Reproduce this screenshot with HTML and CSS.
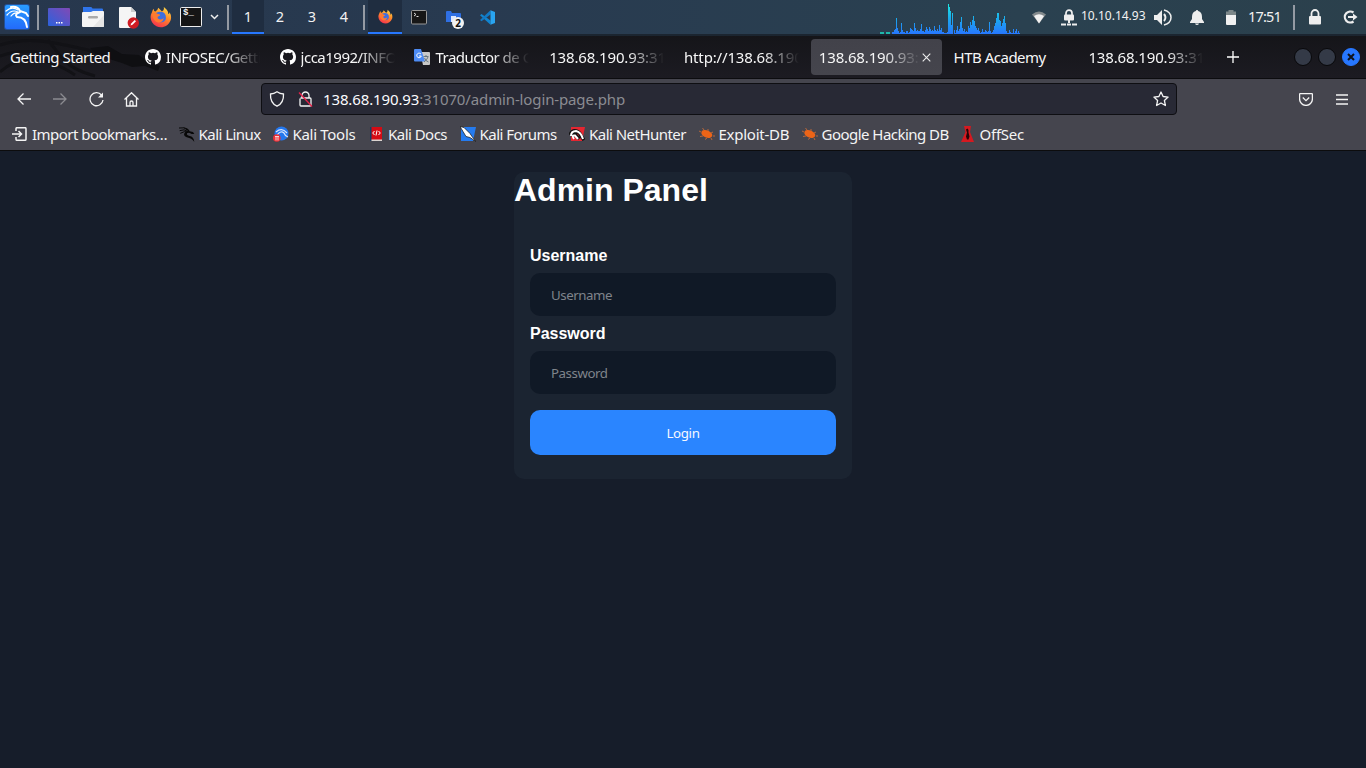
FILE: index.html
```html
<!DOCTYPE html>
<html lang="en">
<head>
<meta charset="utf-8">
<title>Admin Panel</title>
<link rel="stylesheet" href="styles.css">
</head>
<body>
<svg width="0" height="0" class="defs">
  <defs>
    <linearGradient id="gFox" x1=".8" y1="0" x2=".3" y2="1"><stop offset="0" stop-color="#ffe14a"/><stop offset=".45" stop-color="#ff8a28"/><stop offset="1" stop-color="#f5304f"/></linearGradient>
    <linearGradient id="gDesk" x1="0" y1="1" x2="1" y2="0"><stop offset="0" stop-color="#2b62dd"/><stop offset="1" stop-color="#8149b5"/></linearGradient>
    <linearGradient id="gNet" gradientUnits="userSpaceOnUse" x1="0" y1="4" x2="0" y2="34"><stop offset="0" stop-color="#1de9e0"/><stop offset=".5" stop-color="#1ba9ee"/><stop offset="1" stop-color="#2777ff"/></linearGradient>
    <linearGradient id="gKali" x1="0" y1="0" x2="0" y2="1"><stop offset="0" stop-color="#299cff"/><stop offset="1" stop-color="#236bfa"/></linearGradient>
    <symbol id="dragon" viewBox="0 0 24 24"><path d="M0 3Q8 1 13 6M1 7Q8 4 13 8M2 11Q8 7 14 9" fill="none" stroke="currentColor" stroke-width="1.500"/><path d="M6 2Q14 3 16 8L21 9L23 12L19 12Q14 9 12 11Q11 14 16 15Q22 16 23 24Q19 18 14 17.500Q6 16 8 11Q10 7 14 8Q12 5 6 2Z" fill="currentColor"/></symbol>
    <symbol id="firefox" viewBox="0 0 24 24"><path d="M15 1C19 4 20 6 20 9Q22 8 21 6Q24 11 22.500 15.500C20 22 13 25 7 22C1 19-1 12 2 7Q3 4 4 3Q4 6 6 6Q9 4 9 2Q11 4 13 6Q16 5 15 1Z" fill="url(#gFox)"/><path d="M6 8Q14 4 17 10Q19 17 12 18Q6 17 6 11L10 11Q12 9 9 9Q7 9 6 8Z" fill="#3e6fe0"/><path d="M2 9Q5 6 9 9Q12 9 10 11Q7 12 9 14Q12 16 15 13Q14 18 9 18Q4 17 2 9Z" fill="#ff7a30"/></symbol>
    <symbol id="github" viewBox="0 0 16 16"><path fill="currentColor" d="M8 0C3.580 0 0 3.580 0 8c0 3.540 2.290 6.530 5.470 7.590.4.070.55-.17.55-.38v-1.490c-2.010.37-2.530-.49-2.690-.94-.09-.23-.48-.94-.82-1.130-.28-.15-.68-.52-.01-.53.63-.01 1.080.58 1.230.82.72 1.210 1.870.87 2.330.66.07-.52.28-.87.51-1.070-1.780-.2-3.640-.89-3.640-3.950 0-.87.31-1.590.82-2.150-.08-.2-.36-1.020.08-2.120 0 0 .67-.21 2.200.82a7.500 7.500 0 0 1 4 0c1.530-1.040 2.200-.82 2.200-.82.44 1.100.16 1.920.08 2.120.51.56.82 1.270.82 2.150 0 3.070-1.870 3.750-3.650 3.950.29.25.54.73.54 1.480v2.200c0 .21.15.46.55.38A8 8 0 0 0 16 8c0-4.420-3.580-8-8-8Z"/></symbol>
    <symbol id="edb" viewBox="0 0 16 16"><ellipse cx="7.800" cy="8" rx="5.800" ry="3.600" transform="rotate(24 7.800 8)" fill="#ed6417"/><path d="M2 6L0 5M5 4L3.500 2M9 5L9 3M12 7l2-1M14 10h2M12 12l1 2M8 12L6 13.500M4 10L1 10.500" stroke="#b8673a" fill="none"/></symbol>
  </defs>
</svg>

<header class="panel">
  <span class="cell c-logo"><svg width="28" height="28" viewBox="0 0 28 28"><rect x="1" y="1" width="26" height="26" rx="3" fill="#1f6cf0" opacity=".45"/><rect x="2" y="2" width="24" height="24" rx="2" fill="url(#gKali)"/><g fill="none" stroke="#fff" stroke-linecap="round"><path d="M3 8Q9 3 15 7M4 12Q9 6 15 9M8 13Q11 9 15 10" stroke-width="1.200"/><path d="M8 4Q15 3 17 8L23 10L25 13M17 9Q11 11 14 14Q23 14 24 24" stroke-width="2"/></g></svg></span>
  <span class="sep"></span>
  <span class="cell c-desk"><svg width="22" height="18"><rect width="22" height="18" rx="1" fill="url(#gDesk)"/><path d="M8 14h1.500v1.500H8zM10.500 14h1.500v1.500h-1.500zM13 14h1.500v1.500H13z" fill="#fff"/></svg></span>
  <span class="cell c-app"><svg width="22" height="20"><path d="M1 0h8q1 0 1.500 1.500H20q1 0 1 1V9H1z" fill="#2f74ea"/><path d="M0 6q0-1 1-1h8l2-1h10q1 0 1 1v14q0 1-1 1H1q-1 0-1-1z" fill="#f4f4f4"/><path d="M22 8v11q0 1-1 1H11z" fill="#e5e5e5"/><rect x="6" y="9" width="10" height="2.500" rx="1.200" fill="#aaa"/></svg></span>
  <span class="cell c-app c-doc"><svg width="22" height="23"><path d="M2 1h11l5 5v16H2q-1 0-1-1V2q0-1 1-1z" fill="#f5f5f5"/><path d="M13 1l5 5h-5z" fill="#ccc"/><circle cx="15.300" cy="17" r="5.700" fill="#cf1c22"/><path d="M12.500 19.500l.7-2 3.500-3.500 1.300 1.300-3.500 3.500z" fill="#fff"/></svg></span>
  <span class="cell c-app"><svg width="22" height="22"><use href="#firefox"/></svg></span>
  <span class="cell c-term"><svg width="22" height="20"><rect x=".5" y=".5" width="21" height="19" rx="1" fill="#151515" stroke="#eee"/></svg><b class="prompt">$_</b></span>
  <span class="cell c-chev"><svg width="9" height="6"><path d="M1 1l3.500 3.500L8 1" fill="none" stroke="#eee" stroke-width="1.500"/></svg></span>
  <span class="sep"></span>
  <nav class="spaces"><span class="on">1</span><span>2</span><span>3</span><span>4</span></nav>
  <span class="sep"></span>
  <div class="tasks">
    <span class="on"><svg width="15" height="15"><use href="#firefox"/></svg></span>
    <span><svg width="16" height="15"><rect x=".5" y=".5" width="15" height="13.500" rx="1" fill="#171717" stroke="#999"/><path d="M3 3l2 1.500L3 6M5.500 6.500h2" fill="none" stroke="#ddd"/></svg></span>
    <span class="files"><svg width="15" height="12"><path d="M0 1q0-1 1-1h4l1 2h8q1 0 1 1v8H0z" fill="#2f6fe3"/><rect x="5" y="5" width="5" height="6" fill="#dce7ff"/></svg><em>2</em></span>
    <span><svg width="15" height="15" viewBox="0 0 15 15"><path d="M10.500 14.700L0 5.300 1.500 4l9 6.500" fill="#1185d0"/><path d="M10.500 4.500L1.500 11.300 0 10 10.500.3z" fill="#1279c4"/><path d="M10.500.3L15 2v11l-4.500 1.700z" fill="#29a4f0"/></svg></span>
  </div>
  <svg class="net" width="141" height="34" viewBox="0 0 141 34"><path d="M0 33h4M6 33h4" stroke="#1be0c8" stroke-width="1.300"/><path id="net" fill="url(#gNet)"/></svg>
  <span class="cell c-wifi"><svg width="14" height="13"><path d="M0 3.500Q7-2.500 14 3.500L7 12.500z" fill="#82898c"/><path d="M2 5Q7 1.500 12 5L7 12.500z" fill="#f1f1f1"/></svg></span>
  <span class="cell c-vpn"><svg width="16" height="17"><path d="M5 6V4.200a3 3 0 0 1 6 0V6" fill="none" stroke="#eee" stroke-width="1.700"/><rect x="3" y="5.500" width="10" height="6" rx="1" fill="#eee"/><path d="M7 11h2v3H7z" fill="#eee"/><path d="M0 15.500h5M6 15.500h4M11 15.500h5" stroke="#eee" stroke-width="2"/></svg></span>
  <span class="ip">10.10.14.93</span>
  <span class="cell c-vol"><svg width="18" height="17"><path d="M0 6h3l5-5v15l-5-5H0z" fill="#eee"/><path d="M10 5q3 3.500 0 7" fill="none" stroke="#eee" stroke-width="2"/><path d="M10 1q7 2 7 7.500T10 16" fill="none" stroke="#eee" stroke-width="1.500"/></svg></span>
  <span class="cell c-bell"><svg width="14" height="15"><path d="M7 0q1 0 1.200 1Q12 2 12 7v2l2 3v1H0v-1l2-3V7Q2 2 5.800 1 6 0 7 0zM5 13.500h4q-.5 1.500-2 1.500t-2-1.500z" fill="#eee"/></svg></span>
  <span class="cell c-bat"><svg width="10" height="15"><path d="M2.500 0h5v1.500H10V5H0V1.500h2.500z" fill="#7c8789"/><path d="M0 5h10v9q0 1-1 1H1q-1 0-1-1z" fill="#f1f1f1"/></svg></span>
  <span class="clock">17:51</span>
  <span class="sep"></span>
  <span class="cell c-lock"><svg width="14" height="16"><path d="M3.500 8V4.500a3.500 3.500 0 0 1 7 0V8" fill="none" stroke="#eee" stroke-width="1.800"/><rect x="1" y="7" width="12" height="8.500" rx="1" fill="#eee"/></svg></span>
  <span class="cell c-out"><svg width="15" height="14"><path d="M10.500 2.500A5.500 5.500 0 1 0 10.500 11.500" fill="none" stroke="#eee" stroke-width="2.200"/><path d="M5 6h5V3.500L14.500 7 10 10.500V8H5z" fill="#eee"/></svg></span>
</header>

<div class="tabs">
  <svg class="art" width="180" height="43" viewBox="0 36 180 43"><g fill="none" stroke="#121216"><path d="M0 45Q25 37 55 43T95 52T125 60M0 56Q20 49 42 53M48 40L62 58Q72 70 95 76M0 72Q30 45 75 75" stroke-width="3"/></g><path d="M90 48L108 46L122 54L139 55L147 61L160 66L158 71L145 66L132 67L122 63L106 58L96 54Z" fill="#0f0f12"/></svg>
  <div class="tab"><span>Getting Started</span></div>
  <div class="tab"><svg width="16" height="16"><use href="#github"/></svg><span class="fade">INFOSEC/Getti</span></div>
  <div class="tab"><svg width="16" height="16"><use href="#github"/></svg><span class="fade">jcca1992/INFOS</span></div>
  <div class="tab"><svg width="16" height="16"><path d="M6 3h9q1 0 1 1v11q0 1-1 1H9z" fill="#c8c8c8"/><path d="M1 0h6l4 12.500H1q-1 0-1-1V1q0-1 1-1z" fill="#4d8bf4"/><path d="M7 5.200a2.300 2.300 0 1 0 .3 1.800H5" fill="none" stroke="#fff"/><path d="M9.500 7.500h5M12 6v2M14 8q-1 3-4 5M10.500 9q1 3 4 4" fill="none" stroke="#607078" stroke-width=".9"/></svg><span class="fade">Traductor de G</span></div>
  <div class="tab num"><span class="fade">138.68.190.93:310</span></div>
  <div class="tab num"><span class="fade">http://138.68.190.</span></div>
  <div class="tab num active"><span class="fade">138.68.190.93:3</span><svg class="x" width="9" height="9"><path d="M.7.7l7.600 7.600M8.300.7L.7 8.300" stroke="#eee" stroke-width="1.100"/></svg></div>
  <div class="tab academy"><span>HTB Academy</span></div>
  <div class="tab num"><span class="fade">138.68.190.93:310</span></div>
  <svg class="plus" width="12" height="12"><path d="M6 0v12M0 6h12" stroke="#fff" stroke-width="1.300"/></svg>
  <div class="wins"><i></i><i></i><i class="close"><svg width="8" height="8"><path d="M1 1l6 6M7 1L1 7" stroke="#10131b" stroke-width="2"/></svg></i></div>
</div>

<div class="bars">
  <div class="toolbar">
    <svg class="nav" width="14" height="12"><path d="M14 6H1M6.500.5L1 6l5.500 5.500" /></svg>
    <svg class="nav dim" width="14" height="12"><path d="M0 6h13M7.500.5L13 6l-5.500 5.500"/></svg>
    <svg class="nav reload" width="15" height="15"><path d="M12.500 3A6.500 6.500 0 1 0 14 8"/><path d="M14 .5v5H9z" fill="#f4f4f4" stroke="none"/></svg>
    <svg class="nav" width="15" height="15"><path d="M.5 7.500l7-6.800 7 6.800M2.500 6v8h10V6M6 14v-3.500q0-1.500 1.500-1.500T9 10.500V14"/></svg>
    <div class="url">
      <svg class="nav shield" width="16" height="16"><path d="M8 .8q3 2 6.500 2.200Q15 12 8 15.200 1 12 1.500 3 5 2.800 8 .8z"/></svg>
      <svg class="nav lock" width="15" height="16"><path d="M4 7V4.500a3.500 3.500 0 0 1 7 0V7M2.500 7H12q1 0 1 1v6q0 1-1 1H3q-1 0-1-1V7.500"/><path d="M1 1.500l13 14" stroke="#e8214a"/></svg>
      <span class="addr"><b>138.68.190.93</b>:31070/admin-login-page.php</span>
      <svg class="nav star" width="16" height="16"><path d="M8 1l2.100 4.500 5 .6-3.700 3.400 1 5L8 12l-4.400 2.500 1-5L.9 6.100l5-.6z" stroke-linejoin="round"/></svg>
    </div>
    <svg class="nav pocket" width="14" height="13"><path d="M1 .7h12q.4 0 .4.800V6A6.400 6.400 0 0 1 .6 6V1.500Q.6.700 1 .7z"/><path d="M3.800 4.500L7 7.600l3.200-3.100"/></svg>
    <svg class="nav menu" width="12" height="11"><path d="M0 1h12M0 5.500h12M0 10h12"/></svg>
  </div>
  <div class="marks">
    <a style="width:166.500px"><svg class="nav" width="16" height="14"><path d="M4 4V1.700q0-1 1-1h8q1 0 1 1v10.600q0 1-1 1H5q-1 0-1-1V10M0 7h9M6.500 4L9.500 7l-3 3" stroke-width="1.500"/></svg><span>Import bookmarks…</span></a>
    <a style="width:94px"><svg width="16" height="16" color="#080808"><use href="#dragon"/></svg><span>Kali Linux</span></a>
    <a style="width:95.500px"><svg width="16" height="16"><circle cx="8.500" cy="7.500" r="7" fill="#2477ee"/><path d="M3 6Q9 1 14 7M4 9q4-5 7-2 1 3 4 4" fill="none" stroke="#d9e6ff" stroke-width="1.200"/><circle cx="3.800" cy="12" r="3.800" fill="#ec2f36"/><path d="M2 10.500h4M3 11v3.500M5 11v3.500" stroke="#fff" stroke-width=".8"/></svg><span class="kt">Kali Tools</span></a>
    <a style="width:91.500px"><svg width="16" height="16"><path d="M2 1h12v13H2z" fill="#d50b14"/><path d="M2 1h1.500v14H2z" fill="#183d63"/><path d="M3.500 13.500H14V15H3.500z" fill="#dbd4d0"/><path d="M6.500 5L4.700 7l1.800 2M10.500 5l1.800 2-1.800 2M9 4.500l-1 5" fill="none" stroke="#fff"/></svg><span>Kali Docs</span></a>
    <a style="width:109.500px"><svg width="16" height="16"><path d="M1 1h15l-3 14H1z" fill="#257bef"/><path d="M0 .5l4 1 6 6 2 3 4 5-6-4-4-1-3-5z" fill="#fff" stroke="#111" stroke-width=".7"/></svg><span>Kali Forums</span></a>
    <a style="width:129.500px"><svg width="16" height="16"><path d="M2 1h14l-3 14H2z" fill="#e52631"/><path d="M1 9q2-5 6-4 4 1 5 5l3 4M5 11q-3-4 1-3l4 5" fill="none" stroke="#111" stroke-width="3.400"/><path d="M2 10q0-5 5-5 5 1 7 8M5 13q-3-4 1-3.500l3 3.500" fill="none" stroke="#fff" stroke-width="2"/></svg><span>Kali NetHunter</span></a>
    <a class="ex" style="width:103px"><svg width="16" height="16"><use href="#edb"/></svg><span>Exploit-DB</span></a>
    <a style="width:158px"><svg width="16" height="16"><use href="#edb"/></svg><span>Google Hacking DB</span></a>
    <a class="ex"><svg width="16" height="16"><path d="M4 0h7l-1 6 4 10H1L5.500 6z" fill="#d51920"/><path d="M7.500 2.500q1.500 1 1 4l1 4-1 3H7l-1-3 1-4-1-3z" fill="#240608"/></svg><span>OffSec</span></a>
  </div>
</div>

<main>
  <form class="card" onsubmit="return false">
    <h1>Admin Panel</h1>
    <div class="fields">
      <label for="u">Username</label>
      <input id="u" type="text" placeholder="Username">
      <label for="p">Password</label>
      <input id="p" type="password" placeholder="Password">
      <button>Login</button>
    </div>
  </form>
</main>
<script src="script.js"></script>
</body>
</html>
```
FILE: styles.css
```css
* { box-sizing: border-box; }
html, body { height: 100%; margin: 0; }
body { display: flex; flex-direction: column; overflow: hidden; background: #161d2a; font-family: "Noto Sans", sans-serif; color: #fff; }
svg { display: block; flex: none; }
.defs { position: absolute; }

.panel { display: flex; align-items: center; flex: none; height: 34px; background: linear-gradient(90deg, #27374d 0%, #283a50 35%, #2a4150 75%, #2b404c 100%); color: #f2f2f2; }
.cell { display: flex; flex: none; align-items: center; justify-content: center; height: 34px; }
.sep { flex: none; width: 2px; height: 25px; margin-top: 1px; background: #949aa3; }
.c-logo { width: 34px; margin-right: 3px; }
.c-desk { width: 34px; margin-left: 3px; }
.c-app { width: 34px; }
.c-doc { padding-left: 3px; }
.c-term { position: relative; width: 34px; margin-left: -4px; }
.prompt { position: absolute; left: 9px; top: 8px; font: bold 9px/11px "Liberation Mono", monospace; }
.c-chev { width: 20px; margin: 0 3px 0 -4px; }
.spaces { display: flex; margin: 0 3px; }
.spaces span { width: 32px; height: 34px; text-align: center; font-size: 14.500px; line-height: 33px; }
.spaces .on, .tasks .on { background: #1f2d40; border-bottom: 2px solid #2777ff; }
.tasks { display: flex; margin-left: 3px; }
.tasks > span { position: relative; display: flex; align-items: center; justify-content: center; width: 34px; height: 34px; }
.tasks em { position: absolute; left: 16px; top: 17px; width: 12px; height: 12px; border-radius: 50%; background: #f2f2f2; color: #111; font: bold 10px/12px "Noto Sans", sans-serif; text-align: center; }
.net { margin-left: 376px; }
.c-wifi { width: 36px; }
.c-vpn { width: 24px; }
.ip { flex: none; width: 70px; height: 34px; font-size: 12px; line-height: 32px; white-space: nowrap; }
.c-vol { width: 24px; }
.c-bell { width: 44px; }
.c-bat { width: 24px; }
.clock { flex: none; width: 45px; padding-left: 5px; box-sizing: content-box; width: 45px; font-size: 14.500px; line-height: 32px; height: 34px; letter-spacing: -.8px; white-space: nowrap; }
.c-lock { width: 40px; }
.c-out { width: 31px; }

.tabs { position: relative; display: flex; align-items: center; flex: none; height: 45px; padding: 2px 0 2px 2px; border-top: 2px solid #1b2530; border-bottom: 1px solid #0c0c0f; background: linear-gradient(#151519, #1c1b22); font-size: 15px; letter-spacing: -.5px; }
.art { position: absolute; left: 0; top: 0; }
.tab { position: relative; display: flex; align-items: center; flex: none; gap: 5px; width: 131px; height: 36px; margin-right: 3.800px; padding: 0 8px; border-radius: 4px; }
.tab span { flex: 1; min-width: 0; overflow: hidden; white-space: nowrap; color: #f6f6f6; }
.tab .fade { -webkit-mask-image: linear-gradient(90deg, #000 calc(100% - 36px), transparent 100%); mask-image: linear-gradient(90deg, #000 calc(100% - 36px), transparent 100%); }
.num { letter-spacing: -.15px; }
.active { background: linear-gradient(#42424a, #45454d); }
.active .x { margin: 0 3px 0 -3px; }
.plus { margin-left: 12px; }
.wins { display: flex; gap: 6px; margin-left: auto; margin-right: 6px; }
.wins i { display: flex; align-items: center; justify-content: center; width: 18px; height: 18px; border-radius: 50%; background: #343a47; border: 1px solid #08080a; }
.wins .close { background: #2777ff; border-color: #2777ff; }

.bars { flex: none; height: 72px; background: #45454e; border-bottom: 1px solid #0c0c0d; }
.toolbar { display: flex; align-items: center; height: 40px; padding-left: 17px; }
.nav { fill: none; stroke: #f4f4f4; stroke-width: 1.300; }
.toolbar > .nav { margin-right: 22px; }
.toolbar > .dim { opacity: .4; }
.toolbar > .reload { margin-right: 20px; }
.url { display: flex; align-items: center; flex: none; width: 916px; height: 32px; margin-left: 100px; padding: 0 7px; border: 1px solid #0e0e12; border-radius: 4px; background: #282935; }
.lock { margin: 0 10px 0 13px; }
.addr { flex: 1; font-size: 15px; letter-spacing: -.13px; color: #8b8c92; white-space: nowrap; }
.addr b { font-weight: 400; color: #fbfbfe; }
.toolbar > .pocket { margin: 0 23px 0 122px; }
.marks { display: flex; align-items: center; height: 30px; padding-left: 12px; font-size: 15px; letter-spacing: -.53px; color: #f4f4f4; }
.marks a { display: flex; align-items: center; gap: 4px; flex: none; white-space: nowrap; }
.marks .ex { letter-spacing: -.25px; }
.marks .kt { letter-spacing: -.3px; }

main { flex: 1; padding-top: 21px; }
.card { width: 338px; height: 307px; margin: 0 auto; border-radius: 10px; background: #1b2431; font-family: "Liberation Sans", Arial, sans-serif; }
h1 { margin: 0; font-size: 32px; line-height: 37px; }
.fields { display: flex; flex-direction: column; padding: 37px 16px 0; }
label { margin-bottom: 8px; font-size: 16px; font-weight: 700; line-height: 19px; }
input { height: 43px; margin: 0 0 8px; padding: 0 21px; border: 0; border-radius: 10px; background: #101926; color: #fff; font: 13.300px "Noto Sans", sans-serif; letter-spacing: -.45px; }
input::placeholder { color: #7f848b; opacity: 1; }
button { height: 45px; margin-top: 8px; padding: 0; border: 0; border-radius: 10px; background: #2a85ff; color: #f5f8ff; font: 13.300px "Noto Sans", sans-serif; letter-spacing: -.35px; }
```
FILE: script.js
```js
// Network load history, one bar per pixel, bar heights in pixels.
const load = [2,2,4,5,16,6,3,1,2,11,4,2,2,1,3,3,1,2,6,5,4,3,11,6,3,4,3,3,5,10,3,3,2,4,7,5,3,7,5,3,4,3,8,4,3,5,3,9,4,6,2,2,1,1,1,2,30,27,23,9,21,0,4,1,4,8,3,5,12,17,6,3,5,2,3,2,8,6,12,9,14,18,13,8,6,4,6,3,1,2,5,2,2,4,3,2,3,12,3,1,2,4,8,11,16,21,21,14,13,8,11,15,18,11,3,1,1,4,2,1,1,5,1,3,5,1,3,1];
document.getElementById('net').setAttribute('d', load.map((h, i) => `M${12 + i} 34v${-h}h1v${h}z`).join(''));
```
